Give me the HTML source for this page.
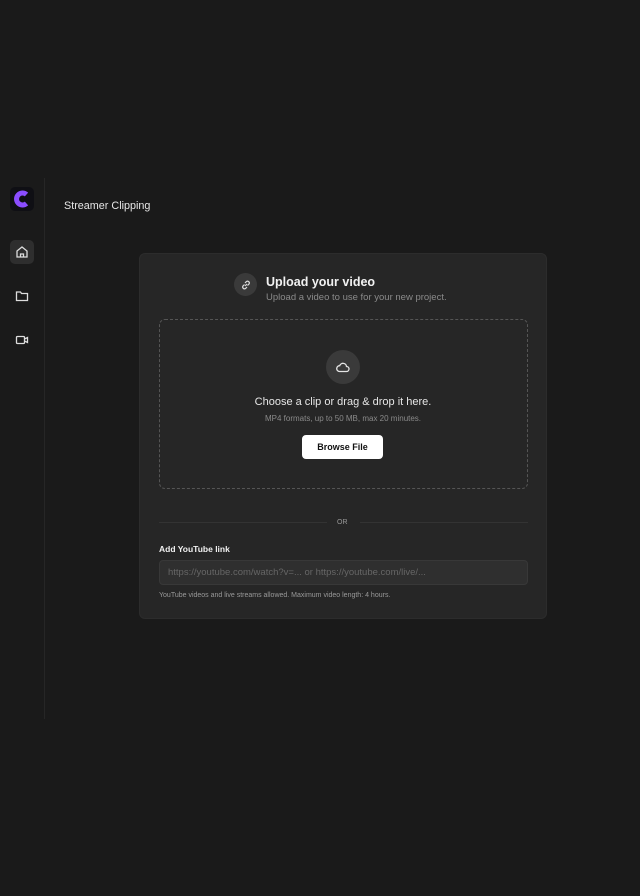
<!DOCTYPE html>
<html><head><style>
*{margin:0;padding:0;box-sizing:border-box}
body{width:640px;height:896px;background:#1a1a1a;font-family:"Liberation Sans",sans-serif;color:#eee;position:relative;overflow:hidden}
.sep{position:absolute;left:44px;top:178px;width:1px;height:541px;background:#262626}
.logo{position:absolute;left:10px;top:187px;width:24px;height:24px;border-radius:5px;background:#0f0f14}
.navbtn{position:absolute;left:10px;width:24px;height:24px;border-radius:5px;display:flex;align-items:center;justify-content:center}
.title{position:absolute;left:64px;top:200px;font-size:10.8px;color:#e6e6e6}
.card{position:absolute;left:139px;top:253px;width:408px;height:366px;background:#262626;border-radius:6px;border:1px solid #2c2c2c}
.abs{position:absolute}
</style></head><body>
<div class="sep"></div>
<div class="logo"><svg width="24" height="24"><path d="M16.5 7.5A6 6 0 1 0 16.5 16.5" fill="none" stroke="#8b4dff" stroke-width="5"/></svg></div>
<div class="navbtn" style="top:240px;background:#2e2e2e"><svg width="14" height="14" viewBox="0 0 14 14" fill="none" stroke="#ddd" stroke-width="1.3"><path d="M2 6L7 2l5 4v6H2z"/><path d="M5.5 12V9h3v3"/></svg></div>
<div class="navbtn" style="top:284px"><svg width="14" height="14" viewBox="0 0 14 14" fill="none" stroke="#ddd" stroke-width="1.3"><path d="M1.5 3h4l1 1.5h6v7h-11z"/></svg></div>
<div class="navbtn" style="top:328px"><svg width="14" height="14" viewBox="0 0 14 14" fill="none" stroke="#ddd" stroke-width="1.3"><rect x="1.5" y="3.5" width="8" height="7" rx="1"/><path d="M9.5 6l3-1.5v5l-3-1.5"/></svg></div>
<div class="title">Streamer Clipping</div>
<div class="card">
 <div class="abs" style="left:94px;top:19px;width:23px;height:23px;border-radius:50%;background:#3a3a3a;display:flex;align-items:center;justify-content:center"><svg width="12" height="12" viewBox="0 0 12 12" fill="none" stroke="#ddd" stroke-width="1.2"><path d="M5 7l2-2M4.5 5.5L3 7a1.8 1.8 0 0 0 2.5 2.5L7 8M7.5 6.5L9 5A1.8 1.8 0 0 0 6.5 2.5L5 4"/></svg></div>
 <div class="abs" style="left:126px;top:21px;font-size:12.5px;font-weight:bold;color:#f2f2f2">Upload your video</div>
 <div class="abs" style="left:126px;top:38px;font-size:9.5px;color:#8a8a8a">Upload a video to use for your new project.</div>
 <div class="abs" style="left:19px;top:65px;width:369px;height:170px;border:1px dashed #555;border-radius:6px"></div>
 <div class="abs" style="left:186px;top:96px;width:34px;height:34px;border-radius:50%;background:#3a3a3a;display:flex;align-items:center;justify-content:center"><svg width="16" height="16" viewBox="0 0 16 16" fill="none" stroke="#e5e5e5" stroke-width="1.3"><path d="M4.5 12.5h7a2.5 2.5 0 0 0 0-5 3.5 3.5 0 0 0-6.8-.8A2.9 2.9 0 0 0 4.5 12.5z"/></svg></div>
 <div class="abs" style="left:0;width:406px;top:142px;text-align:center;font-size:11px;color:#e6e6e6">Choose a clip or drag &amp; drop it here.</div>
 <div class="abs" style="left:0;width:406px;top:160px;text-align:center;font-size:8px;color:#8a8a8a">MP4 formats, up to 50 MB, max 20 minutes.</div>
 <div class="abs" style="left:162px;top:181px;width:81px;height:24px;background:#fff;border-radius:4px;color:#111;font-size:9px;font-weight:bold;display:flex;align-items:center;justify-content:center">Browse File</div>
 <div class="abs" style="left:19px;top:268px;width:168px;height:1px;background:#333"></div>
 <div class="abs" style="left:220px;top:268px;width:168px;height:1px;background:#333"></div>
 <div class="abs" style="left:197px;top:265px;font-size:7px;color:#999">OR</div>
 <div class="abs" style="left:19px;top:290px;font-size:8.5px;font-weight:bold;color:#f0f0f0">Add YouTube link</div>
 <div class="abs" style="left:19px;top:306px;width:369px;height:25px;background:#2f2f2f;border:1px solid #383838;border-radius:4px;padding-left:8px;font-size:9.5px;color:#666;line-height:23px">https://youtube.com/watch?v=... or https://youtube.com/live/...</div>
 <div class="abs" style="left:19px;top:338px;font-size:7px;color:#999">YouTube videos and live streams allowed. Maximum video length: 4 hours.</div>
</div>
</body></html>
